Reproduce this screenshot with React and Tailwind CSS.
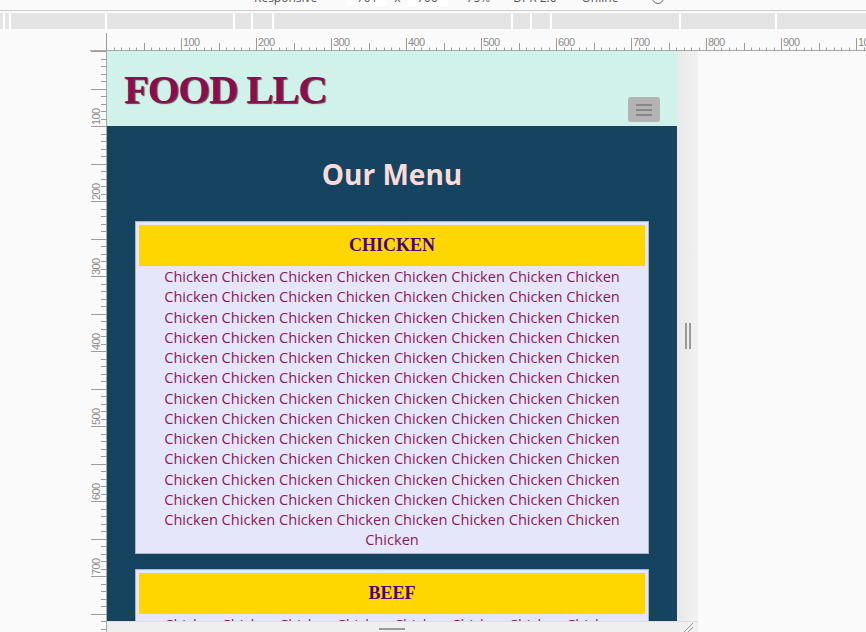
import React from "react";

const chicken = Array(105).fill("Chicken").join(" ");

const segs = [3, 4, 94, 126, 16, 19, 237, 17, 18, 127, 94, 89];

const HRuler = () => {
  const ticks = [];
  for (let i = 0; i <= 102; i++) {
    const x = Math.round(107 + i * 7.5) - 0.5;
    const len = i === 0 ? 18 : i % 10 === 0 ? 13 : i % 5 === 0 ? 8 : 3.5;
    ticks.push(<line key={"t" + i} x1={x} x2={x} y1={22 - len} y2={22} stroke="#9c9c9c" strokeWidth="1" />);
    if (i % 10 === 0 && i > 0) {
      ticks.push(
        <text key={"l" + i} x={x + 1.5} y={16.5} fontSize="11" fill="#8c8c8c" letterSpacing="-0.6" fontFamily="'Liberation Sans', sans-serif">
          {i * 10}
        </text>
      );
    }
  }
  return (
    <svg width="866" height="22" className="block shrink-0">
      <line x1="90" x2="866" y1="21.5" y2="21.5" stroke="#a8a8a8" strokeWidth="1" />
      {ticks}
    </svg>
  );
};

const VRuler = () => {
  const ticks = [];
  for (let i = 0; i <= 78; i++) {
    const y = Math.round(i * 7.5) + 0.5;
    const len = i % 5 === 0 ? 16 : 6;
    ticks.push(<line key={"t" + i} x1={107 - len} x2={107} y1={y} y2={y} stroke="#9c9c9c" strokeWidth="1" />);
    if (i % 10 === 0 && i > 0) {
      ticks.push(
        <text key={"l" + i} transform={`translate(100, ${y - 1.5}) rotate(-90)`} fontSize="11" fill="#8c8c8c" letterSpacing="-0.6" fontFamily="'Liberation Sans', sans-serif">
          {i * 10}
        </text>
      );
    }
  }
  return (
    <svg width="107" height="581" className="block shrink-0">
      <line x1="106.5" x2="106.5" y1="0" y2="581" stroke="#a8a8a8" strokeWidth="1" />
      {ticks}
    </svg>
  );
};

const Card = ({ title }) => (
  <div className="border border-[#aab6c4] bg-[#e6e6fa] p-[3px]">
    <div className="h-[41px] bg-[#ffd700] flex items-center justify-center">
      <h2 className="font-['Liberation_Serif',serif] font-bold text-[18px] text-[#4b0082]">{title}</h2>
    </div>
    <p className="px-[20px] text-center font-['Open_Sans',sans-serif] text-[14.6px] leading-[20.25px] text-[#8b1a5b]">
      {chicken}
    </p>
  </div>
);

export default function App() {
  return (
    <div className="w-[866px] h-[632px] overflow-hidden bg-[#fafafa] flex flex-col font-['Open_Sans',sans-serif]">
      <div className="h-[10px] overflow-hidden shrink-0">
        <div className="-mt-[10px] h-[16px] flex items-center text-[12px] text-[#555]">
          <span className="ml-[254px]">Responsive</span>
          <span className="ml-[30px] w-[40px] h-[16px] bg-white flex items-center justify-center">701</span>
          <span className="ml-[7px]">x</span>
          <span className="ml-[7px] w-[40px] h-[16px] bg-white flex items-center justify-center">700</span>
          <span className="ml-[19px]">75%</span>
          <span className="ml-[23px]">DPR 2.0</span>
          <span className="ml-[25px]">Online</span>
          <span className="ml-[34px] w-[12px] h-[12px] rounded-full border border-[#666]"></span>
        </div>
      </div>
      <div className="h-px bg-[#cdcdcd] shrink-0" />
      <div className="h-[2px] shrink-0" />
      <div className="h-[16px] flex gap-[2px] bg-white shrink-0">
        {segs.map((w, i) => (
          <div key={i} className="h-full bg-[#e4e4e4] shrink-0" style={{ width: w }} />
        ))}
      </div>
      <HRuler />
      <div className="flex">
        <VRuler />
        <div className="flex flex-col">
          <div className="flex">
            <div className="w-[570px] h-[570px] overflow-hidden bg-[#154360] shrink-0">
              <header className="h-[75px] bg-[#d1f2eb] flex justify-between px-[17px]">
                <h1 className="pt-[15px] font-['Liberation_Serif',serif] font-bold text-[41px] leading-[47px] tracking-[-1.3px] text-[#880e4f] [text-shadow:1px_1px_1px_#4a4a4a]">
                  FOOD LLC
                </h1>
                <button className="self-end mb-[4px] w-[32px] h-[25px] rounded-[3px] bg-[#b3b3b3] flex flex-col items-center justify-center gap-[3px]">
                  <span className="block w-[16px] h-[2px] bg-[#878787]" />
                  <span className="block w-[16px] h-[2px] bg-[#878787]" />
                  <span className="block w-[16px] h-[2px] bg-[#878787]" />
                </button>
              </header>
              <main className="px-[28px] pt-[28px]">
                <h2 className="text-center text-[28px] leading-[40px] font-bold text-[#fadbd8] mb-[27px]">Our Menu</h2>
                <Card title="CHICKEN" />
                <div className="h-[15px]" />
                <Card title="BEEF" />
              </main>
            </div>
            <div className="w-[21px] h-[570px] bg-gradient-to-r from-[#e9e9e9] to-[#f1f1f1] flex items-center justify-center gap-[2px]">
              <span className="block w-[2px] h-[26px] bg-[#9a9a9a]" />
              <span className="block w-[2px] h-[26px] bg-[#9a9a9a]" />
            </div>
          </div>
          <div className="w-[591px] h-[11px] bg-[#efefef] border-t border-[#dedede] flex">
            <div className="w-[570px] flex justify-center items-end pb-[2px]">
              <span className="block w-[26px] h-[2px] bg-[#9a9a9a]" />
            </div>
            <svg width="21" height="10" className="block">
              <line x1="7" y1="10" x2="16" y2="1" stroke="#9a9a9a" strokeWidth="1" />
              <line x1="11" y1="10" x2="16" y2="5" stroke="#9a9a9a" strokeWidth="1" />
            </svg>
          </div>
        </div>
      </div>
    </div>
  );
}
